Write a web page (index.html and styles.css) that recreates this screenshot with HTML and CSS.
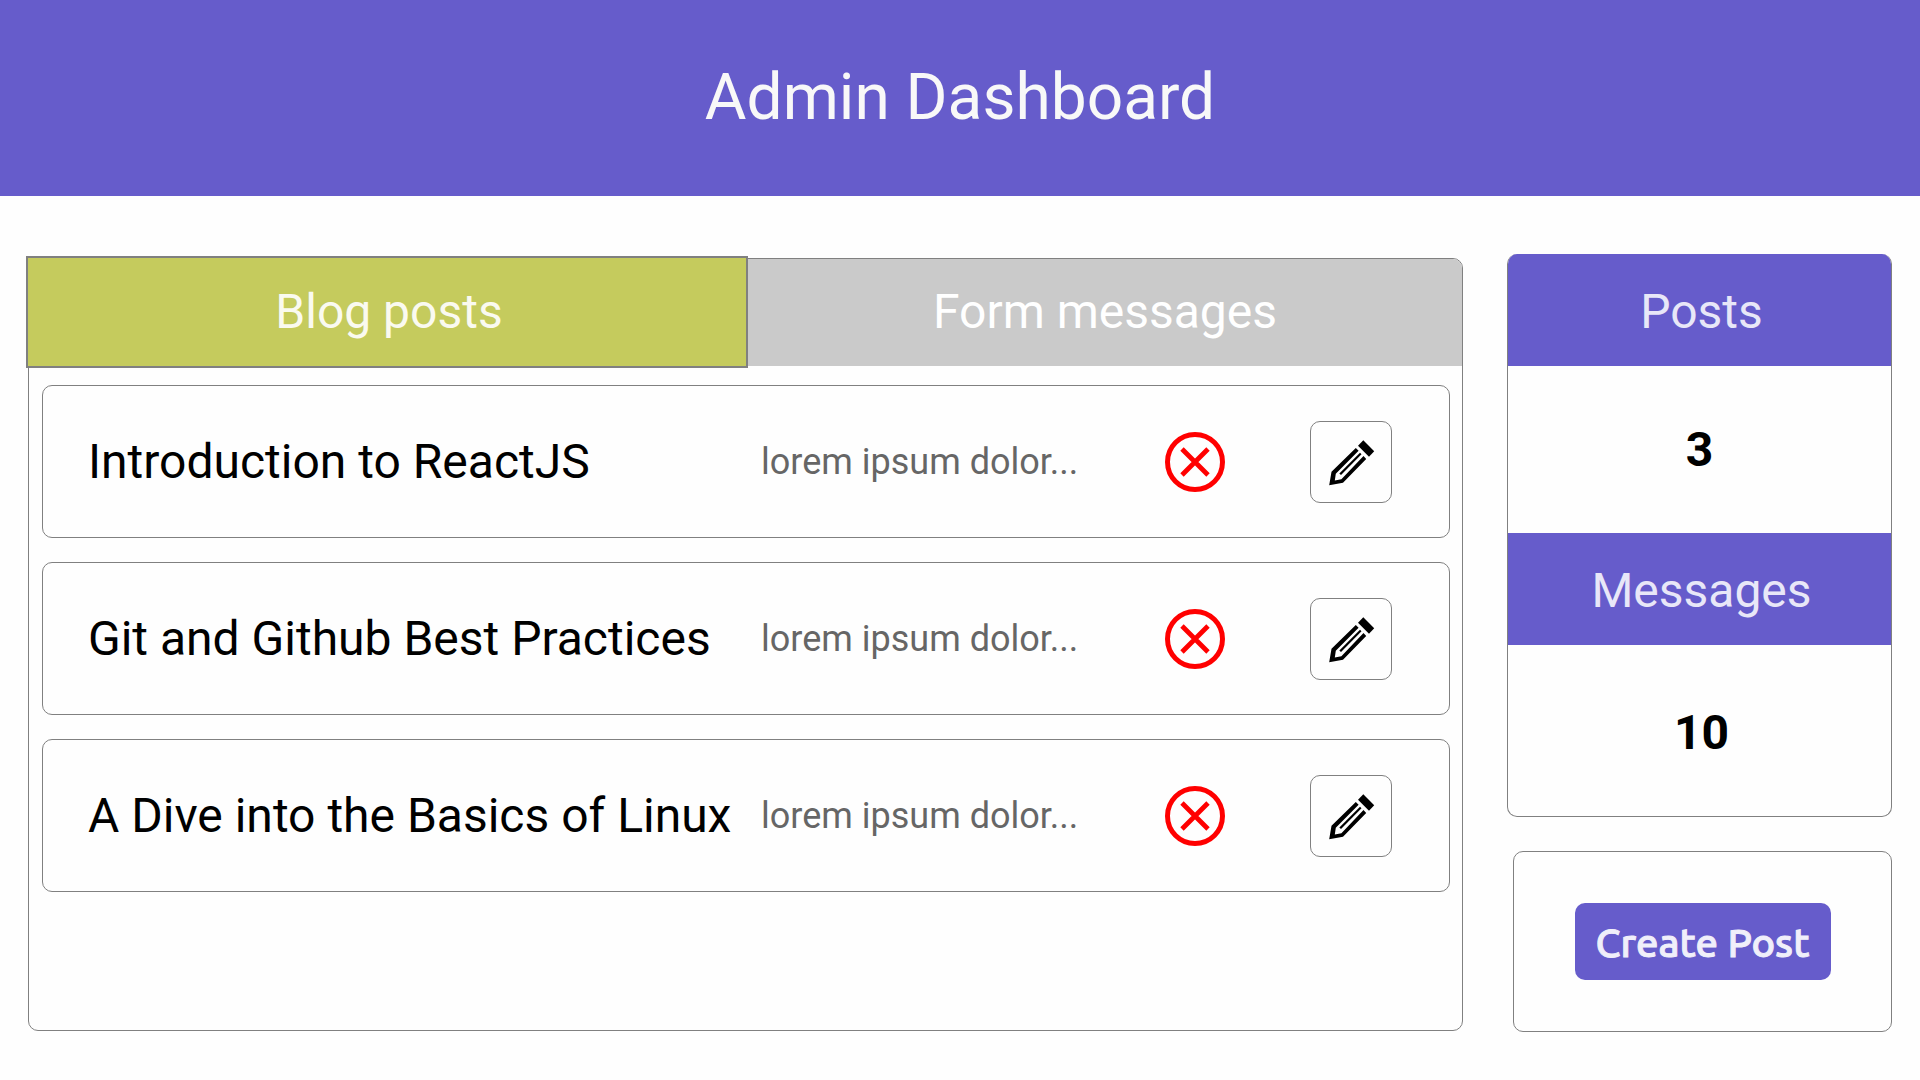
FILE: index.html
```html
<!DOCTYPE html>
<html lang="en">
<head>
<meta charset="utf-8">
<meta name="viewport" content="width=device-width, initial-scale=1">
<title>Admin Dashboard</title>
<link rel="stylesheet" href="styles.css">
</head>
<body>
<svg class="sprite" aria-hidden="true">
  <symbol id="icon-delete" viewBox="0 0 60 60">
    <circle cx="30" cy="30" r="27.5" fill="none" stroke="currentColor" stroke-width="5"/>
    <path d="M17 17 43 43M43 17 17 43" fill="none" stroke="currentColor" stroke-width="4.8"/>
  </symbol>
  <symbol id="icon-edit" viewBox="0 0 48 48">
    <path d="M36.300 2.300 47.200 13.200 42 18.700 31 7.700Z"/>
    <path d="M28.800 10 31.600 12.800 8.800 35.700 7.800 42.500 14.400 41.300 36.500 18.100 39.200 20.900 16 44.700 2.200 47.300 4.500 33.700Z"/>
    <path d="M33 14.800 34.500 16.300 14 37.100 12.300 35.500Z"/>
  </symbol>
</svg>
<header class="header">
  <h1 class="header-title">Admin Dashboard</h1>
</header>
<main class="main">
  <section class="panel">
    <div class="tabs" role="tablist">
      <button class="tab tab-active" type="button" role="tab" aria-selected="true">Blog posts</button>
      <button class="tab" type="button" role="tab" aria-selected="false">Form messages</button>
    </div>
    <ul class="posts">
      <li class="post">
        <h2 class="post-title">Introduction to ReactJS</h2>
        <p class="post-excerpt">lorem ipsum dolor...</p>
        <button class="delete" type="button" aria-label="Delete"><svg class="delete-icon"><use href="#icon-delete"/></svg></button>
        <button class="edit" type="button" aria-label="Edit"><svg class="edit-icon"><use href="#icon-edit"/></svg></button>
      </li>
      <li class="post">
        <h2 class="post-title">Git and Github Best Practices</h2>
        <p class="post-excerpt">lorem ipsum dolor...</p>
        <button class="delete" type="button" aria-label="Delete"><svg class="delete-icon"><use href="#icon-delete"/></svg></button>
        <button class="edit" type="button" aria-label="Edit"><svg class="edit-icon"><use href="#icon-edit"/></svg></button>
      </li>
      <li class="post">
        <h2 class="post-title">A Dive into the Basics of Linux</h2>
        <p class="post-excerpt">lorem ipsum dolor...</p>
        <button class="delete" type="button" aria-label="Delete"><svg class="delete-icon"><use href="#icon-delete"/></svg></button>
        <button class="edit" type="button" aria-label="Edit"><svg class="edit-icon"><use href="#icon-edit"/></svg></button>
      </li>
    </ul>
  </section>
  <aside class="sidebar">
    <section class="stats">
      <h2 class="stat-label">Posts</h2>
      <p class="stat-value">3</p>
      <h2 class="stat-label">Messages</h2>
      <p class="stat-value">10</p>
    </section>
    <section class="create">
      <button class="create-button" type="button">Create Post</button>
    </section>
  </aside>
</main>
</body>
</html>
```
FILE: styles.css
```css
* {
  box-sizing: border-box;
}

body {
  --purple: #665ccb;
  --line: #808080;
  display: flex;
  flex-direction: column;
  min-height: 100vh;
  margin: 0;
  background: #fefefe;
  color: #000;
  font-family: Roboto, "Liberation Sans", sans-serif;
}

h1,
h2,
p,
ul {
  margin: 0;
  padding: 0;
  font-weight: 400;
}

button {
  padding: 0;
  border: 0;
  background: none;
  font: inherit;
  cursor: pointer;
}

svg {
  display: block;
  fill: currentColor;
}

.sprite {
  position: absolute;
  width: 0;
  height: 0;
}

.header {
  display: flex;
  align-items: center;
  justify-content: center;
  height: 196px;
  padding-bottom: 2px;
  background: var(--purple);
}

.header-title {
  color: #f8f8f8;
  font-size: 64px;
}

.main {
  display: grid;
  flex: 1;
  grid-template-columns: minmax(0, 1fr) 385px;
  gap: 44px;
  padding: 58px 28px 48px;
}

.panel {
  margin: 4px 0 1px;
  border: 1px solid var(--line);
  border-radius: 10px;
}

.tabs {
  display: flex;
  height: 107px;
}

.tab {
  flex: 1;
  padding-bottom: 2px;
  border-top-right-radius: 9px;
  background: #cacaca;
  color: #fff;
  font-size: 48px;
}

.tab-active {
  margin: -3px 0 -2px -3px;
  padding-left: 4px;
  border: 2px solid var(--line);
  border-radius: 0;
  background: #c5cb5d;
  color: #fafaf0;
}

.posts {
  display: grid;
  gap: 24px;
  padding: 19px 12px 24px 13px;
  list-style: none;
}

.post {
  display: grid;
  grid-template-columns: minmax(0, 1fr) 319px 60px 82px;
  column-gap: 85px;
  align-items: center;
  min-height: 153px;
  padding: 0 57px 0 45px;
  border: 1px solid var(--line);
  border-radius: 10px;
}

.post-title {
  margin-right: -85px;
  font-size: 48px;
}

.post-excerpt {
  color: #666;
  font-size: 36px;
  white-space: nowrap;
}

.delete {
  color: #f00;
}

.delete-icon {
  width: 60px;
  height: 60px;
}

.edit {
  display: grid;
  place-items: center;
  height: 82px;
  border: 1px solid var(--line);
  border-radius: 10px;
  color: #000;
}

.edit-icon {
  width: 48px;
  height: 48px;
}

.sidebar {
  display: flex;
  flex-direction: column;
  gap: 34px;
}

.stats {
  display: flex;
  flex: 1;
  flex-direction: column;
  overflow: hidden;
  border: 1px solid var(--line);
  border-top: 0;
  border-radius: 10px;
}

.stat-label {
  padding: 30px 0 26px 4px;
  background: var(--purple);
  color: #e8e7f8;
  font-size: 48px;
  line-height: 56px;
  text-align: center;
}

.stat-value {
  display: grid;
  place-items: center;
  min-height: 167px;
  font-size: 48px;
  font-weight: 700;
}

.stat-value:last-child {
  flex: 1;
  padding: 4px 0 0 4px;
}

.create {
  display: grid;
  place-items: center;
  min-height: 181px;
  margin-left: 6px;
  border: 1px solid var(--line);
  border-radius: 10px;
}

.create-button {
  width: 256px;
  height: 77px;
  padding-top: 2px;
  border-radius: 10px;
  background: var(--purple);
  color: #f0effa;
  font-family: Ubuntu, "Noto Sans", sans-serif;
  font-size: 40px;
  font-weight: 500;
  -webkit-text-stroke: 1px currentColor;
}
```
